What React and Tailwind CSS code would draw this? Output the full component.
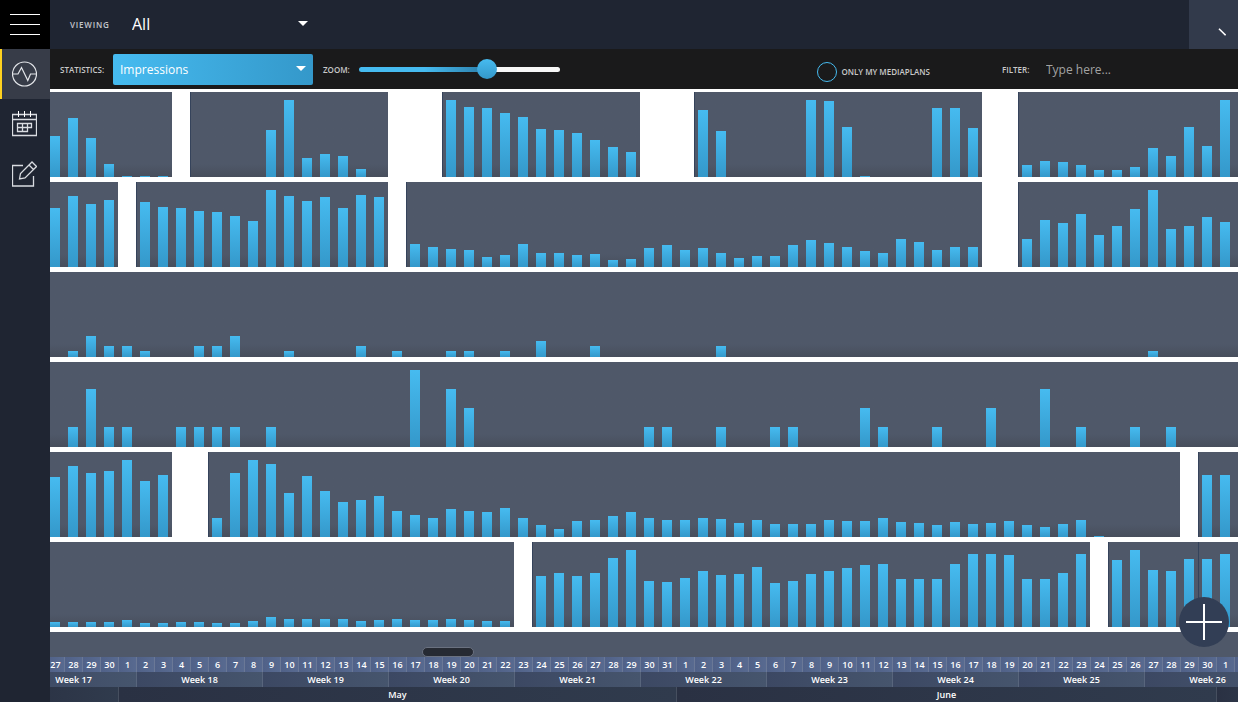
import React, { useState } from "react";
import clsx from "clsx";

// every row is a list of campaigns: `gap` is the number of empty days before it
const rows = [
  [
    { gap: 0, values: [0, 0, 41, 59, 39, 13, 1, 1, 1] },
    { gap: 1, values: [0, 0, 0, 0, 47, 77, 19, 23, 21, 8, 0] },
    { gap: 3, values: [77, 70, 69, 64, 60, 48, 47, 44, 37, 30, 25] },
    {
      gap: 3,
      values: [67, 46, 0, 0, 0, 0, 77, 76, 50, 1, 0, 0, 0, 69, 69, 49],
    },
    {
      gap: 2,
      values: [12, 16, 15, 12, 7, 7, 10, 29, 21, 50, 31, 77, 0, 0],
    },
  ],
  [
    { gap: 0, values: [0, 0, 59, 71, 63, 67] },
    {
      gap: 1,
      values: [65, 60, 59, 56, 55, 51, 46, 77, 71, 66, 70, 59, 72, 70],
    },
    {
      gap: 1,
      values: [
        23, 20, 18, 17, 10, 12, 23, 14, 14, 12, 13, 7, 8, 19, 22, 17, 19, 14, 9,
        11, 11, 22, 27, 24, 20, 16, 14, 28, 25, 17, 20, 20,
      ],
    },
    {
      gap: 2,
      values: [28, 47, 44, 53, 32, 41, 58, 77, 38, 41, 50, 45, 0, 0],
    },
  ],
  [
    {
      gap: 0,
      values: [
        0, 0, 0, 6, 21, 11, 11, 6, 0, 0, 11, 11, 21, 0, 0, 6, 0, 0, 0, 11, 0, 6,
        0, 0, 6, 6, 0, 6, 0, 16, 0, 0, 11, 0, 0, 0, 0, 0, 0, 11, 0, 0, 0, 0, 0,
        0, 0, 0, 0, 0, 0, 0, 0, 0, 0, 0, 0, 0, 0, 0, 0, 0, 0, 6, 0, 0, 0, 0, 0,
        0,
      ],
    },
  ],
  [
    {
      gap: 0,
      values: [
        0, 0, 0, 20, 58, 20, 20, 0, 0, 20, 20, 20, 20, 0, 20, 0, 0, 0, 0, 0, 0,
        0, 77, 0, 58, 39, 0, 0, 0, 0, 0, 0, 0, 0, 0, 20, 20, 0, 0, 20, 0, 0, 20,
        20, 0, 0, 0, 39, 20, 0, 0, 20, 0, 0, 39, 0, 0, 58, 0, 20, 0, 0, 20, 0,
        20, 0, 0, 0, 0, 0,
      ],
    },
  ],
  [
    { gap: 0, values: [0, 0, 60, 71, 64, 66, 77, 56, 62] },
    {
      gap: 2,
      values: [
        19, 64, 77, 73, 44, 61, 46, 35, 37, 41, 26, 22, 19, 28, 26, 25, 29, 19,
        12, 8, 16, 17, 21, 25, 19, 17, 17, 19, 18, 14, 17, 13, 13, 13, 17, 16,
        16, 19, 15, 14, 12, 15, 13, 14, 16, 12, 10, 13, 17, 1, 0, 0, 0, 0,
      ],
    },
    { gap: 1, values: [62, 62, 0, 0] },
  ],
  [
    {
      gap: 0,
      values: [
        0, 0, 5, 5, 5, 5, 7, 4, 4, 5, 5, 4, 4, 6, 10, 8, 8, 8, 8, 6, 7, 8, 7, 7,
        8, 7, 6, 6,
      ],
    },
    {
      gap: 1,
      values: [
        51, 54, 51, 54, 69, 77, 46, 45, 49, 56, 52, 53, 60, 44, 46, 53, 56, 59,
        62, 63, 48, 48, 48, 63, 73, 73, 72, 48, 48, 54, 73,
      ],
    },
    { gap: 1, values: [67, 77, 57, 56, 68] },
    { gap: 0, values: [68, 73, 0, 0] },
  ],
];

const DAY_WIDTH = 18;

const months = [
  { name: "April", from: 25, to: 30 },
  { name: "May", from: 1, to: 31 },
  { name: "June", from: 1, to: 30 },
  { name: "July", from: 1, to: 3 },
];

const days = months.flatMap(({ name, from, to }) =>
  Array.from({ length: to - from + 1 }, (_, i) => ({
    key: `${name}-${from + i}`,
    day: from + i,
  }))
);

const weeks = [17, 18, 19, 20, 21, 22, 23, 24, 25, 26];

const PulseIcon = () => (
  <svg width="25" height="26" viewBox="0 0 25 26" fill="none" stroke="#e4e6ea">
    <circle cx="12.5" cy="13" r="12" strokeWidth="1.2" />
    <path d="M.5 13H6L9.5 6.5 15.8 19.5 18.5 13H24.5" strokeWidth="1.2" />
  </svg>
);

const CalendarIcon = () => (
  <svg width="25" height="26" viewBox="0 0 25 26" fill="none" stroke="#d9dce1">
    <path d="M.5 3.5h24v21H.5zM.5 8.5h24" strokeWidth="1.3" />
    <path d="M6.5 0v6M12.5 0v6M18.5 0v6" stroke="#fff" />
    <path d="M5.5 12.5h14v4h-14zM5.5 16.5v4h10v-8M10.5 12.5v8" strokeWidth="1.3" />
  </svg>
);

const EditIcon = () => (
  <svg width="25" height="26" viewBox="0 0 25 26" fill="none" stroke="#d9dce1">
    <path d="M11 4.5H.5v20.5h21V15" strokeWidth="1.3" />
    <path
      d="M7.5 18l1-5.5L20 1l4.5 4.5L13 17zM17 4l4.5 4.5"
      strokeWidth="1.3"
    />
  </svg>
);

const Caret = ({ className }) => (
  <svg width="10" height="5" viewBox="0 0 10 5" className={className}>
    <path d="M0 0h10L5 5z" fill="#fff" />
  </svg>
);

const menu = [
  { label: "Statistics", icon: <PulseIcon />, active: true },
  { label: "Calendar", icon: <CalendarIcon /> },
  { label: "Edit", icon: <EditIcon /> },
];

const Sidebar = () => (
  <aside className="w-[50px] shrink-0 bg-[#1f2532]">
    <button
      type="button"
      aria-label="Menu"
      className="w-full h-[49px] bg-black flex flex-col items-center justify-center gap-[9px]"
    >
      <span className="w-[30px] h-px bg-white" />
      <span className="w-[30px] h-px bg-white" />
      <span className="w-[30px] h-px bg-white" />
    </button>
    <nav>
      {menu.map((el) => (
        <a
          key={el.label}
          href="#"
          aria-label={el.label}
          className={clsx(
            "flex h-[50px] items-center border-l-2 pl-[10px]",
            el.active ? "bg-[#373c48] border-[#ffd21f]" : "border-transparent"
          )}
        >
          {el.icon}
        </a>
      ))}
    </nav>
  </aside>
);

const Header = () => (
  <header className="flex h-[49px] bg-[#1f2532]">
    <div className="flex items-center pl-5">
      <label
        htmlFor="viewing"
        className="w-[62px] text-[8px] font-semibold tracking-widest text-[#c3c6cc]"
      >
        VIEWING
      </label>
      <div className="relative flex items-center pb-[2px]">
        <select
          id="viewing"
          className="w-[184px] h-8 appearance-none bg-transparent text-base text-white outline-none"
        >
          <option>All</option>
        </select>
        <Caret className="absolute right-2 pointer-events-none" />
      </div>
    </div>
    <button
      type="button"
      aria-label="Search"
      className="ml-auto w-[49px] bg-[#323a4b] flex items-end justify-end pb-3 pr-3"
    >
      <svg width="8" height="9" viewBox="0 0 8 9">
        <path d="M1 .7L7.6 7.3" stroke="#fff" strokeWidth="1.6" />
      </svg>
    </button>
  </header>
);

const Toolbar = () => {
  const [zoom, setZoom] = useState(65);
  return (
    <div className="flex h-10 items-center bg-[#1a1a1b] text-[8px] font-semibold text-[#c9c9c9] whitespace-nowrap">
      <label htmlFor="statistics" className="w-[53px] ml-[10px] pt-[2px]">
        STATISTICS:
      </label>
      <div className="relative flex items-center">
        <select
          id="statistics"
          className="w-[200px] h-[31px] pl-[7px] pt-px appearance-none rounded-xs bg-linear-to-r from-[#46bbf0] to-[#3498ca] text-xs font-normal text-white outline-none"
        >
          <option>Impressions</option>
        </select>
        <Caret className="absolute right-[7px] mb-[2px] pointer-events-none" />
      </div>
      <label htmlFor="zoom" className="w-9 ml-[10px] pt-[2px]">
        ZOOM:
      </label>
      <input
        id="zoom"
        type="range"
        value={zoom}
        onChange={(e) => setZoom(e.target.value)}
        className="w-[201px] h-[5px] appearance-none rounded-full bg-[#f7f7f7] bg-linear-to-r from-[#46bbf0] from-50% to-[#2b7ba6] bg-no-repeat outline-none [&::-webkit-slider-thumb]:appearance-none [&::-webkit-slider-thumb]:size-5 [&::-webkit-slider-thumb]:rounded-full [&::-webkit-slider-thumb]:bg-linear-to-b [&::-webkit-slider-thumb]:from-[#46bbf0] [&::-webkit-slider-thumb]:to-[#3498ca]"
        style={{ backgroundSize: `${zoom}% 100%` }}
      />
      <label className="ml-auto flex items-center gap-1 pt-[6px]">
        <input
          type="checkbox"
          className="size-5 appearance-none rounded-full border border-[#46bbf0] checked:bg-[#46bbf0]"
        />
        ONLY MY MEDIAPLANS
      </label>
      <label htmlFor="filter" className="w-11 ml-[72px] pt-[2px]">
        FILTER:
      </label>
      <input
        id="filter"
        type="text"
        placeholder="Type here..."
        className="w-[192px] h-8 bg-transparent text-xs font-normal text-white outline-none placeholder:text-[#a3a3a3]"
      />
    </div>
  );
};

const Campaign = ({ gap, values, last }) => (
  <div
    className={clsx(
      "flex h-full shrink-0 items-end bg-linear-to-t from-[#474e5c] to-[#4f5869] to-15% shadow-[inset_1px_0_0_#35435b]",
      last && "grow"
    )}
    style={{ marginLeft: gap * DAY_WIDTH }}
  >
    {values.map((value, i) => (
      <div key={i} className="w-[18px] shrink-0 px-1">
        <div
          className="bg-linear-to-b from-[#46bbf0] to-[#3498ca]"
          style={{ height: value }}
        />
      </div>
    ))}
  </div>
);

const Timeline = () => (
  <div className="shrink-0 -ml-10 text-[9px] leading-[15px] font-semibold text-white text-center">
    <div className="flex bg-[#53648a]">
      {days.map((el, i) => (
        <div
          key={el.key}
          className="w-[18px] h-[15px] shrink-0 border-l border-[#6a7896] bg-linear-to-r from-[#506188] to-[#586a90]"
        >
          {i > 1 && i < days.length - 2 && el.day}
        </div>
      ))}
    </div>
    <div className="flex bg-[#3e4b66]">
      {weeks.map((week) => (
        <div
          key={week}
          className="w-[126px] shrink-0 border-l border-[#58657c] bg-linear-to-r from-[#3c4863] to-[#46556d]"
        >
          Week {week}
        </div>
      ))}
    </div>
    <div className="flex bg-[#2a3143]">
      {months.map(({ name, from, to }) => (
        <div
          key={name}
          className="h-[15px] shrink-0 border-l border-[#464f5f] bg-linear-to-r from-[#2a3143] to-[#303b4d]"
          style={{ width: (to - from + 1) * DAY_WIDTH }}
        >
          {/* no label on months that are cut by the range */}
          {to - from > 20 && name}
        </div>
      ))}
    </div>
  </div>
);

const App = () => {
  return (
    <div className="flex min-h-screen bg-[#4f5869] font-['Open_Sans',sans-serif]">
      <Sidebar />
      <div className="flex min-w-0 flex-1 flex-col">
        <Header />
        <Toolbar />
        <main className="flex flex-1 flex-col overflow-hidden">
          <div className="flex flex-col gap-[5px] bg-white pt-[3px] pb-[5px]">
            {rows.map((campaigns, i) => (
              <div key={i} className="flex h-[85px] -ml-10">
                {campaigns.map((el, j) => (
                  <Campaign
                    key={j}
                    {...el}
                    last={j === campaigns.length - 1}
                  />
                ))}
              </div>
            ))}
          </div>
          <div className="flex flex-1 items-end pl-[372px]">
            <div className="w-[52px] h-[10px] rounded-full border border-[#6a7180] bg-[#262a33]" />
          </div>
          <Timeline />
        </main>
      </div>
      <button
        type="button"
        aria-label="Add"
        className="fixed right-[9px] bottom-[55px] flex size-[50px] items-center justify-center rounded-full bg-[#323e55]"
      >
        <svg width="36" height="36" viewBox="0 0 36 36">
          <path d="M18 0v36M0 18h36" stroke="#fff" strokeWidth="2" />
        </svg>
      </button>
    </div>
  );
};

export default App;
